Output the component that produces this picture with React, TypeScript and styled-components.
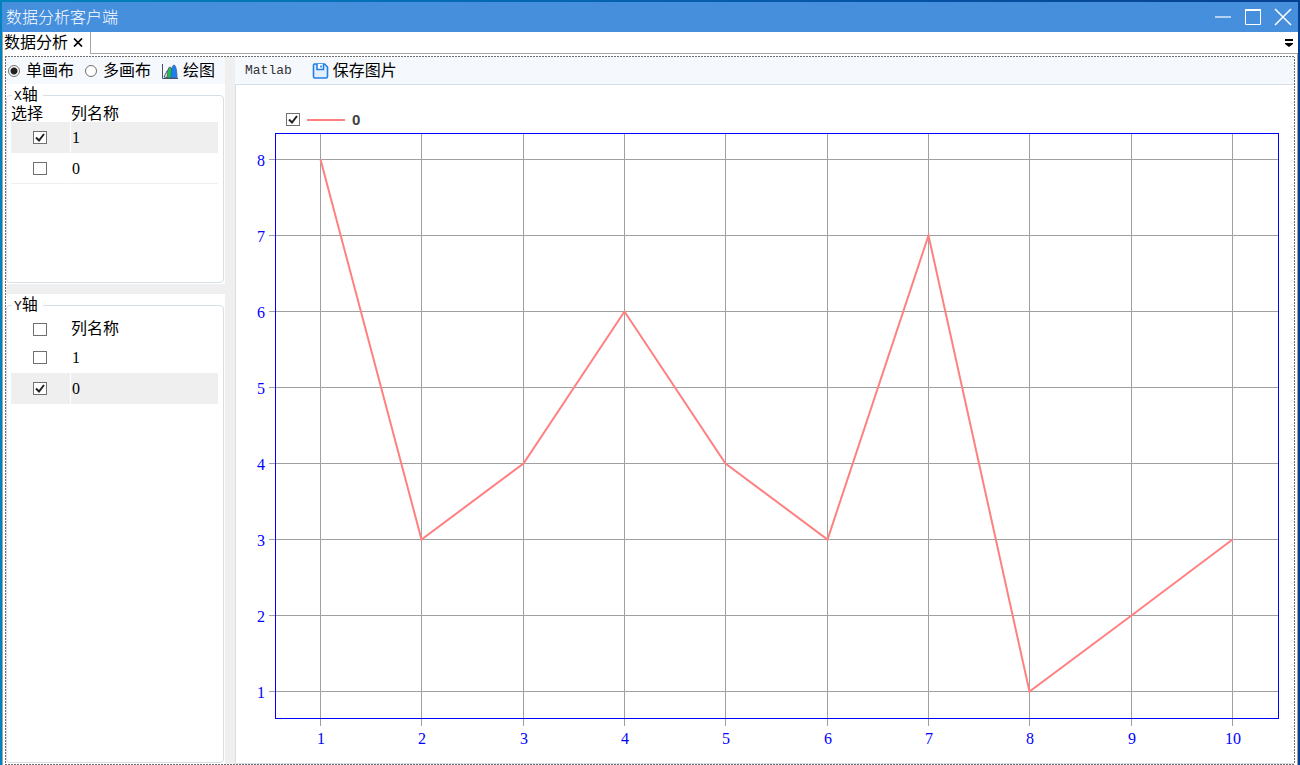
import React, { useLayoutEffect, useRef, useState } from "react";
import styled, { createGlobalStyle } from "styled-components";

const song = `"Liberation Serif", "Noto Sans CJK SC", serif`;
const mono = `"Liberation Mono", "Noto Sans CJK SC", monospace`;

const Global = createGlobalStyle`
  * { box-sizing: border-box; }
  html, body, #root { height: 100%; margin: 0; }
  body { font: 16px/20px ${song}; color: #000; overflow: hidden; }
  button, input { font: inherit; color: inherit; margin: 0; padding: 0; }
`;

const Desktop = styled.div`
  height: 100%;
  padding: 2px 2px 0;
  background: linear-gradient(90deg, #0083bd, #0660ae 50%, #053f92);
  display: flex;
  flex-direction: column;
`;

const TitleBar = styled.header`
  height: 30px;
  flex: none;
  display: flex;
  align-items: center;
  justify-content: space-between;
  padding: 0 6px 0 4px;
  background: #468fdd;
  color: #fff;
`;

const Title = styled.h1`
  margin: 0;
  padding-top: 2px;
  font-size: 16px;
  font-weight: 300;
`;

const WindowButtons = styled.div`
  display: flex;
  gap: 12px;
`;

const IconButton = styled.button`
  display: flex;
  border: 0;
  background: none;
`;

const TabStrip = styled.nav`
  height: 22px;
  flex: none;
  display: flex;
  background: #fff;
`;

const Tab = styled.div`
  display: flex;
  align-items: flex-start;
  gap: 5px;
  padding: 1px 7px 0 1px;
  border: solid #a5a5a5;
  border-width: 0 1px;
`;

const TabClose = styled(IconButton)`
  padding-top: 5px;
`;

const TabRest = styled.div`
  flex: 1;
  display: flex;
  justify-content: flex-end;
  align-items: center;
  padding-right: 4px;
  border-bottom: 1px solid #a5a5a5;
`;

const Page = styled.div`
  flex: 1;
  min-height: 0;
  display: flex;
  padding: 2px 2px 0;
  background: #fff;
  border: solid #a5a5a5;
  border-width: 0 1px;
`;

const dash = "#6e6e6e 0 2px, #fff 2px 3px";

const Focus = styled.main`
  flex: 1;
  min-width: 0;
  display: flex;
  padding: 1px;
  background:
    repeating-linear-gradient(90deg, ${dash}) 0 0 / 100% 1px no-repeat,
    repeating-linear-gradient(90deg, ${dash}) 0 100% / 100% 1px no-repeat,
    repeating-linear-gradient(180deg, ${dash}) 0 0 / 1px 100% no-repeat,
    repeating-linear-gradient(180deg, ${dash}) 100% 0 / 1px 100% no-repeat;
`;

const Side = styled.aside`
  width: 229px;
  flex: none;
  display: flex;
  flex-direction: column;
  padding-right: 10px;
  background: #efefef;
`;

const Toolbar = styled.div`
  height: 27px;
  flex: none;
  display: flex;
  align-items: center;
  padding: 0 2px;
  background: #f5f8fd;
`;

const RadioLabel = styled.label`
  display: flex;
  align-items: center;
  gap: 6px;
  margin-right: 11px;
`;

const Radio = styled.input.attrs({ type: "radio" })`
  appearance: none;
  width: 12px;
  height: 12px;
  border: 1px solid #707070;
  border-radius: 50%;
  background: #fff;
  &:checked {
    background: radial-gradient(circle, #212121 0 3px, #fff 4px);
  }
`;

const ToolButton = styled(IconButton)`
  align-items: center;
  gap: 4px;
`;

const Panel = styled.section<{ $grow?: boolean }>`
  flex: ${(p) => (p.$grow ? "1" : "none")};
  height: ${(p) => (p.$grow ? "auto" : "200px")};
  margin-bottom: ${(p) => (p.$grow ? "0" : "10px")};
  display: flex;
  padding: 0 1px 1px 0;
  background: #fff;
`;

const Group = styled.fieldset`
  flex: 1;
  min-width: 0;
  margin: 0;
  padding: 0 5px 0 4px;
  border: 1px solid #d5dfe5;
  border-radius: 4px;
`;

const Legend = styled.legend`
  height: 22px;
  margin-left: 1px;
  padding: 0 5px 0 2px;
  line-height: 22px;
`;

const AxisLetter = styled.span`
  font-family: ${mono};
  font-size: 13px;
`;

const Table = styled.table`
  width: 100%;
  table-layout: fixed;
  border-collapse: separate;
  border-spacing: 0;
`;

const HeadRow = styled.tr<{ $tall?: boolean }>`
  height: ${(p) => (p.$tall ? "26px" : "16px")};
`;

const Head = styled.th<{ $first?: boolean }>`
  width: ${(p) => (p.$first ? "59px" : "auto")};
  padding: 0 0 0 ${(p) => (p.$first ? "0" : "1px")};
  font-weight: 400;
  line-height: 16px;
  text-align: left;
`;

const Cell = styled.td`
  padding: 1px 0 0 1px;
  border-left: 1px solid #fff;
`;

const CheckCell = styled.td`
  padding: 0 0 0 22px;
`;

const Row = styled.tr<{ $on?: boolean; $line?: boolean }>`
  height: 31px;
  background: ${(p) => (p.$on ? "#efefef" : "#fff")};
  td {
    border-bottom: 1px solid ${(p) => (p.$line || p.$on ? "#efefef" : "#fff")};
  }
`;

const Box = styled.input.attrs({ type: "checkbox" })`
  appearance: none;
  display: block;
  width: 14px;
  height: 13px;
  border: 1px solid #707070;
  background: #fff;
  &:checked {
    background: #fff
      url("data:image/svg+xml,%3Csvg xmlns='http://www.w3.org/2000/svg' viewBox='0 0 12 11'%3E%3Cpath d='M2 5.500l3 3 5-6.500' fill='none' stroke='%23212121' stroke-width='2'/%3E%3C/svg%3E")
      center / 12px 11px no-repeat;
  }
`;

const HeadBox = styled(Box)`
  margin-left: 22px;
`;

const Main = styled.section`
  flex: 1;
  min-width: 0;
  display: flex;
  flex-direction: column;
`;

const ChartBar = styled(Toolbar)`
  height: 28px;
  padding: 0 10px;
  gap: 20px;
  border-bottom: 1px solid #d5dfe5;
`;

const MatlabButton = styled(IconButton)`
  padding-top: 1px;
  font: 13px/20px ${mono};
  color: #333;
`;

const Canvas = styled.div`
  flex: 1;
  min-height: 0;
  display: flex;
  flex-direction: column;
  padding: 24px 15px 0 20px;
  border-left: 1px solid #d5dfe5;
  border-bottom: 1px solid #d5dfe5;
`;

const LegendItem = styled.label`
  display: flex;
  align-items: center;
  gap: 7px;
  height: 21px;
  padding-left: 30px;
  color: #404040;
  font: bold 15px/20px "Liberation Sans", sans-serif;
`;

const Stroke = styled.span`
  width: 38px;
  height: 2px;
  background: #ff8080;
`;

const Plot = styled.div`
  flex: 1;
  min-height: 0;
  svg { display: block; font: 16px ${song}; }
`;

const values = [8, 3, 4, 6, 4, 3, 7, 1, 2, 3];
const levels = [1, 2, 3, 4, 5, 6, 7, 8];

function Chart() {
  const ref = useRef<HTMLDivElement>(null);
  const [size, setSize] = useState({ w: 1023, h: 633 });
  useLayoutEffect(() => {
    const el = ref.current!;
    const measure = () => setSize({ w: el.clientWidth, h: el.clientHeight });
    measure();
    const watcher = new ResizeObserver(measure);
    watcher.observe(el);
    return () => watcher.disconnect();
  }, []);

  const left = 19;
  const top = 3;
  const right = size.w - 1;
  const bottom = size.h - 45;
  const px = (v: number) => Math.floor(left + ((v - 0.55) / 9.9) * (right - left));
  const py = (v: number) => Math.floor(bottom - ((v - 0.65) / 7.7) * (bottom - top));

  return (
    <Plot ref={ref}>
      <svg width={size.w} height={size.h} role="img" aria-label="0">
        <g stroke="#a0a0a0" shapeRendering="crispEdges">
          {values.map((_, i) => (
            <line key={i} x1={px(i + 1) + 0.5} x2={px(i + 1) + 0.5} y1={top} y2={bottom + 8} />
          ))}
          {levels.map((v) => (
            <line key={v} x1={left - 6} x2={right} y1={py(v) + 0.5} y2={py(v) + 0.5} />
          ))}
        </g>
        <rect x={left + 0.5} y={top + 0.5} width={right - left} height={bottom - top} fill="none" stroke="#0000ff" />
        <g fill="#0000ff" textAnchor="middle">
          {values.map((_, i) => (
            <text key={i} x={px(i + 1) + 1} y={bottom + 26}>{i + 1}</text>
          ))}
          {levels.map((v) => (
            <text key={v} x={left - 14} y={py(v) + 7}>{v}</text>
          ))}
        </g>
        <polyline
          points={values.map((v, i) => `${px(i + 1) + 0.5},${py(v) + 0.5}`).join(" ")}
          fill="none"
          stroke="#ff8080"
          strokeWidth="2"
        />
      </svg>
    </Plot>
  );
}

export default function App() {
  return (
    <Desktop>
      <Global />
      <TitleBar>
        <Title>数据分析客户端</Title>
        <WindowButtons>
          <IconButton aria-label="最小化">
            <svg width="18" height="18"><path d="M1 9h16" stroke="#b5d2f1" strokeWidth="2" /></svg>
          </IconButton>
          <IconButton aria-label="最大化">
            <svg width="18" height="18"><path d="M1.5 2v14.500h15V2" fill="none" stroke="#fff" /><path d="M1 2h16" stroke="#fff" strokeWidth="2" /></svg>
          </IconButton>
          <IconButton aria-label="关闭">
            <svg width="18" height="18"><path d="M1 1l16 16M17 1L1 17" stroke="#fff" strokeWidth="1.500" /></svg>
          </IconButton>
        </WindowButtons>
      </TitleBar>
      <TabStrip>
        <Tab>
          数据分析
          <TabClose aria-label="关闭标签">
            <svg width="10" height="9"><path d="M1 .5l8 8M9 .5l-8 8" stroke="#000" strokeWidth="1.700" /></svg>
          </TabClose>
        </Tab>
        <TabRest>
          <IconButton aria-label="标签列表">
            <svg width="9" height="8"><path d="M0 0h8v2H0zM0 4h8v1L4 8 0 5z" fill="#000" /></svg>
          </IconButton>
        </TabRest>
      </TabStrip>
      <Page>
        <Focus>
          <Side>
            <Toolbar>
              <RadioLabel><Radio name="canvas" defaultChecked />单画布</RadioLabel>
              <RadioLabel><Radio name="canvas" />多画布</RadioLabel>
              <ToolButton>
                <svg width="17" height="16">
                  <path d="M2 14L5 8l2-1 2 8z" fill="#fff" stroke="#46506b" />
                  <path d="M5 15c0-5 1-11 3-11s3 6 3 11z" fill="#1fc04a" stroke="#46506b" strokeWidth=".8" />
                  <path d="M9 15c0-6 1-13 3-13s3 7 3 13z" fill="#1e80f0" stroke="#3a5f9a" strokeWidth=".8" />
                  <path d="M.5 1v14.500H16" fill="none" stroke="#46506b" />
                </svg>
                绘图
              </ToolButton>
            </Toolbar>
            <Panel>
              <Group>
                <Legend><AxisLetter>X</AxisLetter>轴</Legend>
                <Table>
                  <thead>
                    <HeadRow><Head $first>选择</Head><Head>列名称</Head></HeadRow>
                  </thead>
                  <tbody>
                    <Row $on><CheckCell><Box defaultChecked aria-label="X 1" /></CheckCell><Cell>1</Cell></Row>
                    <Row $line><CheckCell><Box aria-label="X 0" /></CheckCell><Cell>0</Cell></Row>
                  </tbody>
                </Table>
              </Group>
            </Panel>
            <Panel $grow>
              <Group>
                <Legend><AxisLetter>Y</AxisLetter>轴</Legend>
                <Table>
                  <thead>
                    <HeadRow $tall><Head $first><HeadBox aria-label="全选" /></Head><Head>列名称</Head></HeadRow>
                  </thead>
                  <tbody>
                    <Row><CheckCell><Box aria-label="Y 1" /></CheckCell><Cell>1</Cell></Row>
                    <Row $on><CheckCell><Box defaultChecked aria-label="Y 0" /></CheckCell><Cell>0</Cell></Row>
                  </tbody>
                </Table>
              </Group>
            </Panel>
          </Side>
          <Main>
            <ChartBar>
              <MatlabButton>Matlab</MatlabButton>
              <ToolButton>
                <svg width="17" height="16" fill="none" stroke="#1e80e8" strokeWidth="1.600">
                  <path fill="#e3effc" d="M2.500 1h10L15.500 4v9.500q0 1.500-1.500 1.500H3q-1.500 0-1.500-1.500V2q0-1 1-1z" />
                  <path fill="#fff" d="M5 1v5.500h6.500V1" />
                  <path d="M9 2.500v2" />
                </svg>
                保存图片
              </ToolButton>
            </ChartBar>
            <Canvas>
              <LegendItem><Box defaultChecked /><Stroke />0</LegendItem>
              <Chart />
            </Canvas>
          </Main>
        </Focus>
      </Page>
    </Desktop>
  );
}
